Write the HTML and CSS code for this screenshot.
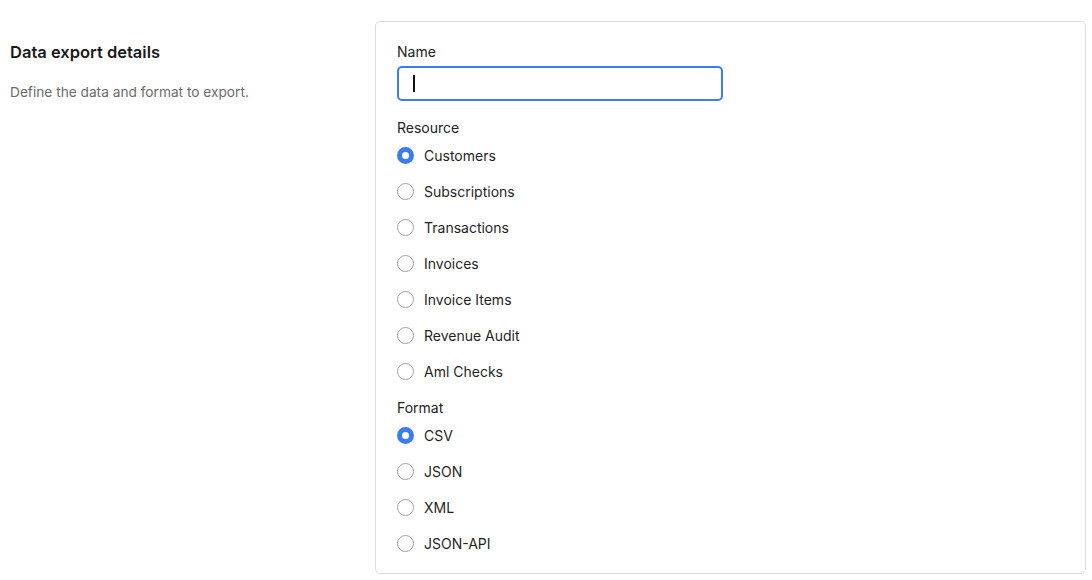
FILE: index.html
```html
<!DOCTYPE html>
<html lang="en">
<head>
<meta charset="utf-8">
<title>Data export</title>
<link rel="stylesheet" href="styles.css">
</head>
<body>
<div class="page">
  <div class="intro">
    <h2 class="title">Data export details</h2>
    <p class="desc">Define the data and format to export.</p>
  </div>
  <form class="card">
    <label class="field-label" for="name">Name</label>
    <div class="input"><span class="caret"></span></div>

    <div class="group">
      <div class="field-label">Resource</div>
      <label class="radio"><span class="dot on"></span>Customers</label>
      <label class="radio"><span class="dot"></span>Subscriptions</label>
      <label class="radio"><span class="dot"></span>Transactions</label>
      <label class="radio"><span class="dot"></span>Invoices</label>
      <label class="radio"><span class="dot"></span>Invoice Items</label>
      <label class="radio"><span class="dot"></span>Revenue Audit</label>
      <label class="radio"><span class="dot"></span>Aml Checks</label>
    </div>

    <div class="group group-format">
      <div class="field-label">Format</div>
      <label class="radio"><span class="dot on"></span>CSV</label>
      <label class="radio"><span class="dot"></span>JSON</label>
      <label class="radio"><span class="dot"></span>XML</label>
      <label class="radio"><span class="dot"></span>JSON-API</label>
    </div>
  </form>
</div>
</body>
</html>
```

FILE: styles.css
```css
* { box-sizing: border-box; }
html, body { margin: 0; padding: 0; background: #fff; }
body {
  font-family: Inter, "Noto Sans", "Liberation Sans", sans-serif;
  color: #1d1d1f;
  -webkit-font-smoothing: antialiased;
}
.page {
  display: grid;
  grid-template-columns: 365px 711px;
  padding: 21px 0 0 10px;
}
.intro { padding-top: 21px; }
.title {
  margin: 0;
  font-size: 16.5px;
  line-height: 20px;
  font-weight: 600;
  color: #1a1a1a;
}
.desc {
  margin: 20px 0 0;
  font-size: 13.7px;
  line-height: 20px;
  color: #6b6b6b;
}
.card {
  border: 1px solid #dcdcdc;
  border-radius: 5px;
  padding: 20px 21px 11px;
  display: flex;
  flex-direction: column;
}
.field-label {
  display: block;
  font-size: 14px;
  line-height: 20px;
  color: #222;
}
.input {
  margin-top: 4px;
  width: 326px;
  height: 35px;
  border: 2px solid #3b7cf2;
  border-radius: 5px;
  display: flex;
  align-items: center;
  padding-left: 14px;
}
.caret {
  width: 2px;
  height: 17px;
  background: #111;
}
.group { margin-top: 17px; display: flex; flex-direction: column; }
.group-format { margin-top: 8px; }
.radio {
  height: 36px;
  padding-bottom: 2px;
  display: flex;
  align-items: center;
  gap: 10px;
  font-size: 14px;
  color: #1f1f1f;
}
.dot {
  width: 17px;
  height: 17px;
  border-radius: 50%;
  border: 1.6px solid #a0a0a0;
  background: #fff;
  flex: none;
}
.dot.on {
  border: 5px solid #3b7cf2;
}
```
